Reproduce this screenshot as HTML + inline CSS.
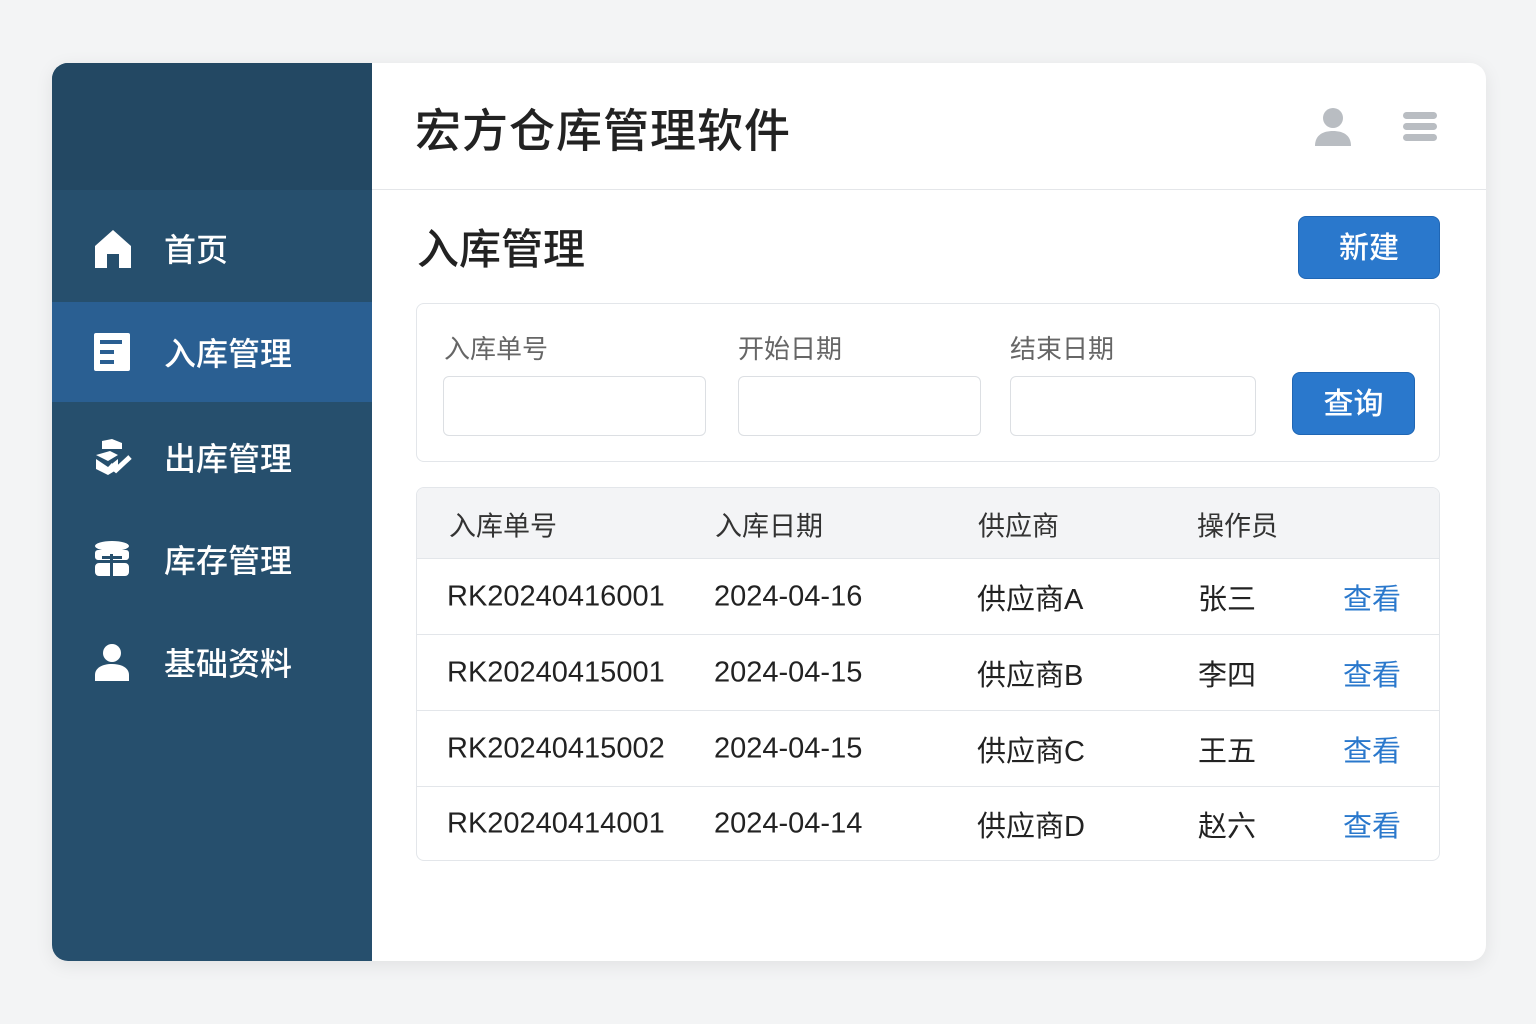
<!DOCTYPE html>
<html><head><meta charset="utf-8"><style>
*{margin:0;padding:0;box-sizing:border-box}
body{width:1536px;height:1024px;background:#f3f4f5;font-family:"Liberation Sans","Noto Sans CJK SC",sans-serif;position:relative;overflow:hidden}
.card{position:absolute;left:52px;top:63px;width:1434px;height:898px;background:#fff;border-radius:16px;overflow:hidden;box-shadow:0 4px 18px rgba(0,0,0,.08)}
.side{position:absolute;left:0;top:0;width:320px;height:898px;background:#264f6d}
.sidetop{position:absolute;left:0;top:0;width:320px;height:127px;background:#234863}
.item{position:absolute;left:0;width:320px;height:100px;color:#fff;font-size:32px;font-weight:500}
.item span{position:absolute;left:112px;top:50%;transform:translateY(-50%)}
.item svg{position:absolute;left:42px;top:50%;transform:translateY(-50%)}
.abs{position:absolute}
.lbl{position:absolute;top:266px;font-size:26px;color:#666}
.inp{position:absolute;top:313px;height:60px;border:1px solid #dcdfe3;border-radius:6px;background:#fff}
.btn{position:absolute;background:#2a78cc;color:#fff;border-radius:8px;font-size:30px;text-align:center;font-weight:500;border:1px solid #1f66b4}
.row{position:absolute;left:364px;width:1023px;height:76px;border-top:1px solid #e3e6ea;font-size:29px;color:#222}
.row div,.th div{position:absolute;top:50%;transform:translateY(-50%)}
.lk{color:#2a78cc}
</style></head><body>
<div class="card">
<div class="side">
<div class="sidetop"></div>
<div class="item" style="top:135px"><svg width="38" height="40" viewBox="0 0 38 40"><path d="M19 2 L37 18 V40 H25 V26 H13 V40 H1 V18 Z" fill="#fff"/></svg><span>首页</span></div>
<div class="item" style="top:239px;background:#2a5f92"><svg width="36" height="38" viewBox="0 0 36 38"><rect x="0" y="0" width="36" height="38" rx="2" fill="#fff"/><rect x="6" y="7" width="22" height="4" fill="#2a5f92"/><rect x="6" y="17" width="14" height="4" fill="#2a5f92"/><rect x="6" y="27" width="14" height="4" fill="#2a5f92"/></svg><span>入库管理</span></div>
<div class="item" style="top:344px"><svg width="38" height="36" viewBox="0 0 38 36"><path d="M8 2 L18 0 L28 4 V10 H8 Z" fill="#fff"/><path d="M2 16 L16 12 L24 16 L14 22 Z" fill="#fff"/><path d="M2 20 L14 28 L24 20 L24 30 L14 36 L2 30Z" fill="#fff"/><path d="M16 26 L22 31 L36 18" stroke="#fff" stroke-width="5" fill="none"/></svg><span>出库管理</span></div>
<div class="item" style="top:446px"><svg width="36" height="38" viewBox="0 0 36 38"><ellipse cx="18" cy="6" rx="17" ry="5" fill="#fff"/><rect x="1" y="10" width="34" height="10" rx="3" fill="#fff"/><rect x="1" y="23" width="34" height="13" rx="4" fill="#fff"/><rect x="16" y="14" width="3" height="22" fill="#264f6d"/><rect x="8" y="16" width="20" height="3" fill="#264f6d"/></svg><span>库存管理</span></div>
<div class="item" style="top:549px"><svg width="36" height="38" viewBox="0 0 36 38"><circle cx="18" cy="10" r="9" fill="#fff"/><path d="M1 38 V32 C1 25 8 21 18 21 C28 21 35 25 35 32 V38 Z" fill="#fff"/></svg><span>基础资料</span></div>
</div>
<div class="abs" style="left:320px;top:126px;width:1114px;height:1px;background:#e4e6e9"></div>
<div class="abs" style="left:363px;top:32px;font-size:46px;color:#222;font-weight:500;letter-spacing:1px">宏方仓库管理软件</div>
<svg class="abs" style="left:1262px;top:44px" width="38" height="40" viewBox="0 0 38 40"><circle cx="19" cy="11" r="10" fill="#b9bdc2"/><path d="M1 39 C1 28 9 24 19 24 C29 24 37 28 37 39Z" fill="#b9bdc2"/></svg>
<svg class="abs" style="left:1351px;top:49px" width="34" height="30"><rect y="0" width="34" height="7" rx="3.5" fill="#b9bdc2"/><rect y="11" width="34" height="7" rx="3.5" fill="#b9bdc2"/><rect y="22" width="34" height="7" rx="3.5" fill="#b9bdc2"/></svg>
<div class="abs" style="left:365px;top:153px;font-size:42px;color:#222;font-weight:500">入库管理</div>
<div class="btn" style="left:1246px;top:153px;width:142px;height:63px;line-height:63px">新建</div>
<div class="abs" style="left:364px;top:240px;width:1024px;height:159px;border:1px solid #e3e6ea;border-radius:8px"></div>
<div class="lbl" style="left:392px">入库单号</div>
<div class="lbl" style="left:686px">开始日期</div>
<div class="lbl" style="left:958px">结束日期</div>
<div class="inp" style="left:391px;width:263px"></div>
<div class="inp" style="left:686px;width:243px"></div>
<div class="inp" style="left:958px;width:246px"></div>
<div class="btn" style="left:1240px;top:309px;width:123px;height:63px;line-height:63px">查询</div>
<div class="abs" style="left:364px;top:424px;width:1024px;height:374px;border:1px solid #e3e6ea;border-radius:8px;overflow:hidden">
<div class="th abs" style="left:0;top:0;width:1024px;height:71px;background:#f3f4f6;font-size:27px;color:#333">
<div style="left:32px">入库单号</div><div style="left:298px">入库日期</div><div style="left:561px">供应商</div><div style="left:780px">操作员</div></div>
</div>
<div class="row" style="top:495px"><div style="left:31px">RK20240416001</div><div style="left:298px">2024-04-16</div><div style="left:561px">供应商A</div><div style="left:782px">张三</div><div class="lk" style="left:927px">查看</div></div>
<div class="row" style="top:571px"><div style="left:31px">RK20240415001</div><div style="left:298px">2024-04-15</div><div style="left:561px">供应商B</div><div style="left:782px">李四</div><div class="lk" style="left:927px">查看</div></div>
<div class="row" style="top:647px"><div style="left:31px">RK20240415002</div><div style="left:298px">2024-04-15</div><div style="left:561px">供应商C</div><div style="left:782px">王五</div><div class="lk" style="left:927px">查看</div></div>
<div class="row" style="top:723px;height:74px"><div style="left:31px">RK20240414001</div><div style="left:298px">2024-04-14</div><div style="left:561px">供应商D</div><div style="left:782px">赵六</div><div class="lk" style="left:927px">查看</div></div>
</div>
</body></html>
